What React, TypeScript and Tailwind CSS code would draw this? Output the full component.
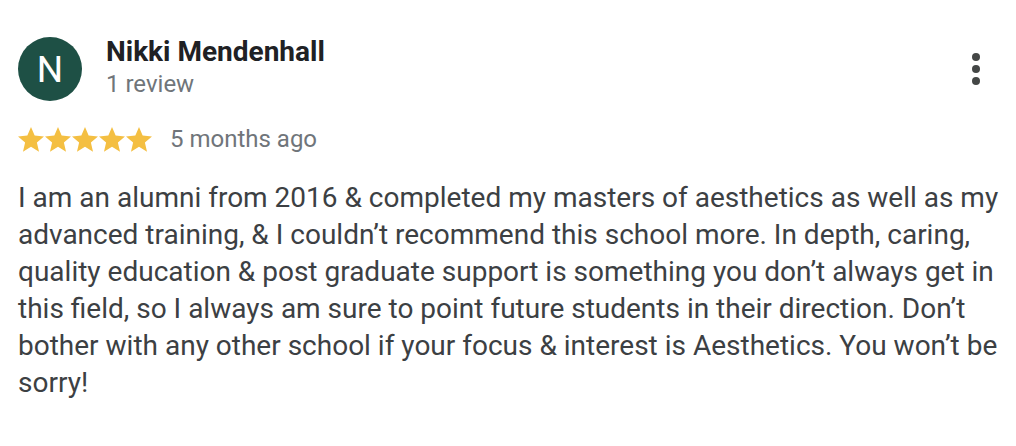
import React from "react";

const Star = () => (
  <svg width="26" height="25" viewBox="2 2 20 19.27" className="block">
    <path
      fill="#f4bf42"
      d="M12 17.27L18.18 21l-1.64-7.03L22 9.24l-7.19-.61L12 2 9.19 8.63 2 9.24l5.46 4.73L5.82 21z"
    />
  </svg>
);

export default function App() {
  return (
    <div
      className="w-[1016px] h-[446px] bg-white overflow-hidden"
      style={{ fontFamily: "Roboto, 'Liberation Sans', sans-serif" }}
    >
      <div className="pl-[18px] pr-[18px] pt-[37px]">
        <div className="flex items-start">
          <div className="w-[64px] h-[64px] rounded-full bg-[#1e5045] flex items-center justify-center text-white text-[37px] leading-none shrink-0">
            N
          </div>
          <div className="ml-[24px] flex-1 flex flex-col">
            <div className="text-[28px] font-bold text-[#202124] leading-[30px]">
              Nikki Mendenhall
            </div>
            <div className="text-[24px] text-[#70757a] leading-[28px] mt-[3px]">1 review</div>
          </div>
          <div className="flex flex-col items-center gap-[4px] mt-[16px] mr-[18px]">
            <span className="w-[8px] h-[8px] rounded-full bg-[#444746]" />
            <span className="w-[8px] h-[8px] rounded-full bg-[#444746]" />
            <span className="w-[8px] h-[8px] rounded-full bg-[#444746]" />
          </div>
        </div>
        <div className="flex items-center mt-[24px] h-[28px]">
          <div className="flex gap-[1px]">
            <Star />
            <Star />
            <Star />
            <Star />
            <Star />
          </div>
          <span className="ml-[18px] text-[24px] text-[#70757a] leading-[28px]">5 months ago</span>
        </div>
        <p className="mt-[26px] w-[990px] text-[28px] leading-[37px] text-[#3c4043]">
          I am an alumni from 2016 &amp; completed my masters of aesthetics as well as my advanced
          training, &amp; I couldn’t recommend this school more. In depth, caring, quality education
          &amp; post graduate support is something you don’t always get in this field, so I always am
          sure to point future students in their direction. Don’t bother with any other school if
          your focus &amp; interest is Aesthetics. You won’t be sorry!
        </p>
      </div>
    </div>
  );
}
